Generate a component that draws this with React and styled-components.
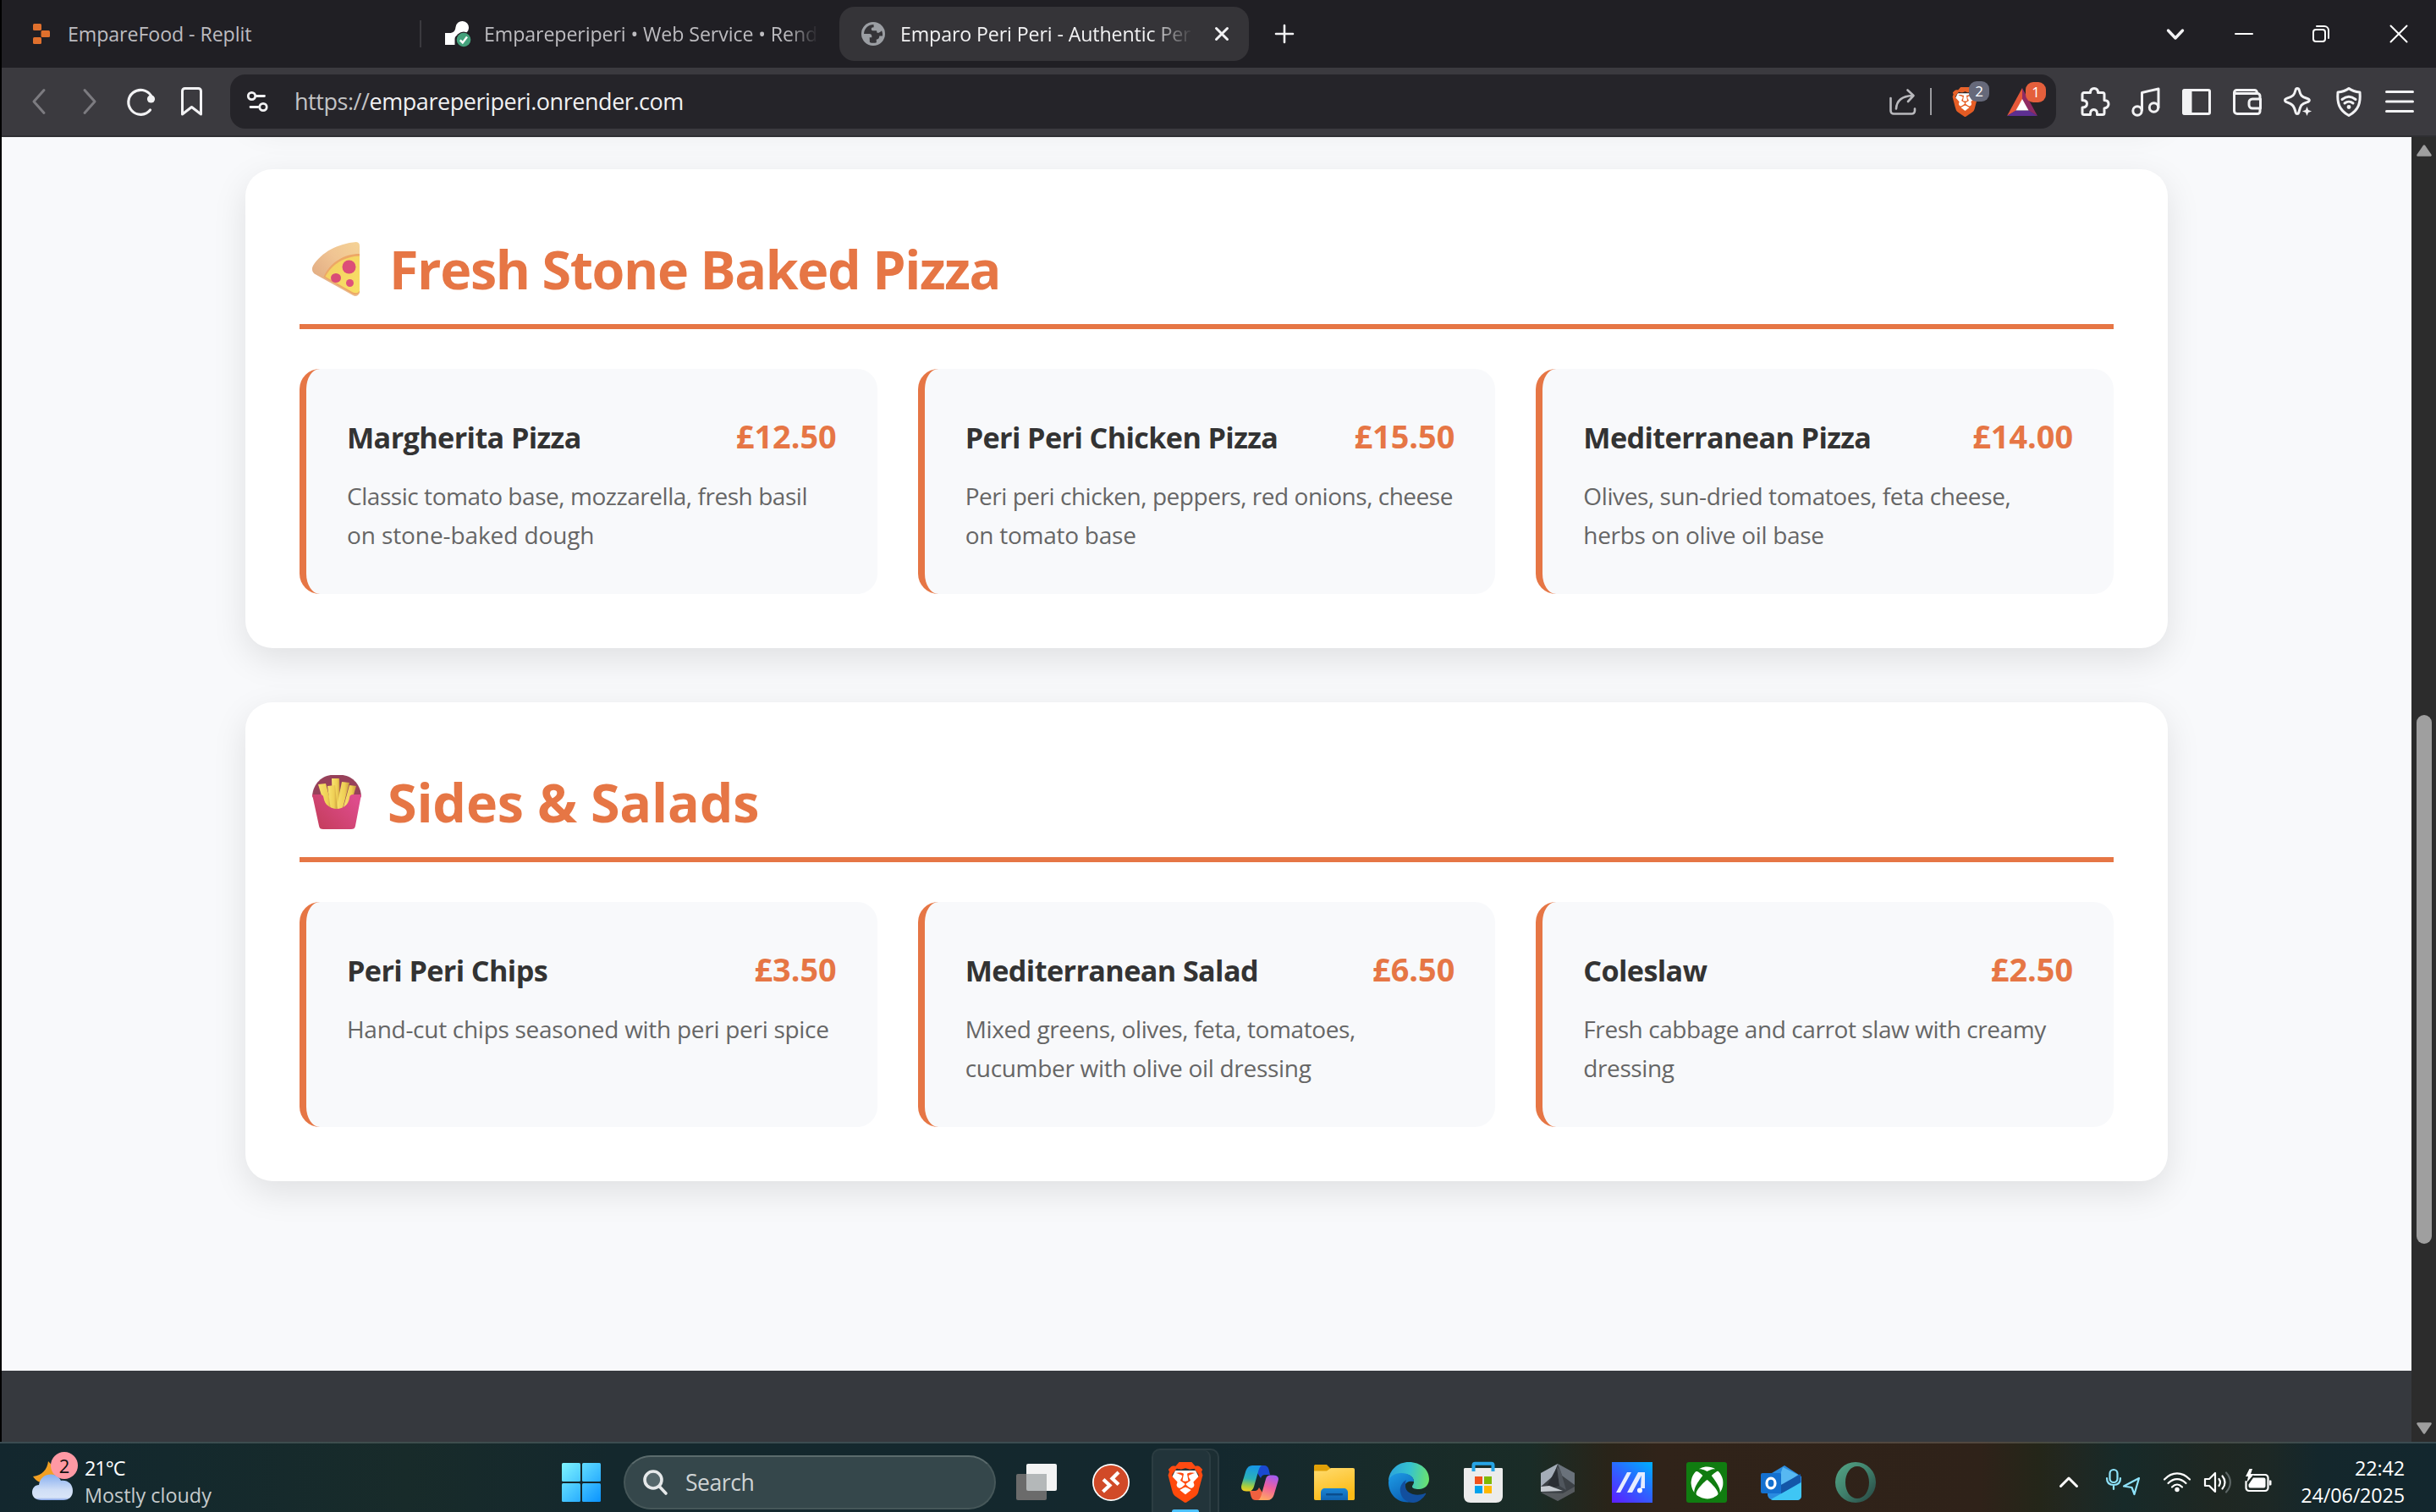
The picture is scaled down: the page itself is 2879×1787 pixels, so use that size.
import React from "react";
import styled, { createGlobalStyle } from "styled-components";
import { SiBrave } from "react-icons/si";
import { FaXbox } from "react-icons/fa";

const Global = createGlobalStyle`
  * { box-sizing: border-box; }
  html, body { margin: 0; padding: 0; background: #000; }
  body { font-family: "Open Sans", "Noto Sans", sans-serif; overflow: hidden; }
  h2, h3, p { margin: 0; }
  svg { display: block; flex: none; overflow: visible; }
`;

const orange = "#e67645";

const Screen = styled.div`
  width: 2879px;
  height: 1787px;
  display: flex;
  flex-direction: column;
  overflow: hidden;
`;
const BrowserFrame = styled.div`
  height: 1704px;
  border-left: 2px solid #000;
  display: flex;
  flex-direction: column;
`;

/* Tab strip */
const TabStrip = styled.div`
  height: 80px;
  flex: none;
  background: #201f24;
  display: flex;
  align-items: center;
`;
const Tab = styled.div`
  width: ${(p) => p.$width}px;
  height: 64px;
  padding-left: ${(p) => p.$pad}px;
  border-radius: 18px;
  background: ${(p) => (p.$active ? "#353438" : "transparent")};
  color: ${(p) => (p.$active ? "#f2f2f3" : "#bdbcc0")};
  display: flex;
  align-items: center;
`;
const TabTitle = styled.div`
  width: ${(p) => p.$width}px;
  margin-left: ${(p) => p.$gap}px;
  font-size: 23.2px;
  letter-spacing: ${(p) => p.$track || 0}px;
  line-height: 36px;
  padding-bottom: 1px;
  white-space: nowrap;
  mask-image: ${(p) => (p.$fade ? `linear-gradient(90deg, #000 calc(100% - ${p.$fade}px), transparent)` : "none")};
`;
const TabDivider = styled.div`
  width: 2px;
  height: 32px;
  background: #3b3a3f;
`;
const CloseSlot = styled.div`
  margin-left: 26px;
`;
const NewTab = styled.div`
  margin-left: 31px;
`;
const WindowControls = styled.div`
  margin-left: auto;
  padding-right: 2px;
  display: flex;
  align-items: center;
`;
const ControlSlot = styled.div`
  width: ${(p) => p.$width}px;
  display: flex;
  justify-content: center;
`;

/* Toolbar */
const Toolbar = styled.div`
  height: 82px;
  flex: none;
  background: #3b3a3f;
  border-bottom: 2px solid #2f2f33;
  display: flex;
  align-items: center;
  padding: 0 13px 0 14px;
`;
const ToolSlot = styled.div`
  width: 60px;
  height: 60px;
  flex: none;
  display: flex;
  align-items: center;
  justify-content: center;
`;
const AddressBar = styled.div`
  width: 2158px;
  height: 64px;
  margin: 0 16px;
  padding: 0 12px 0 20px;
  border-radius: 18px;
  background: #252429;
  display: flex;
  align-items: center;
`;
const Url = styled.div`
  margin-left: 31px;
  margin-right: auto;
  font-size: 27px;
  letter-spacing: -0.45px;
  line-height: 40px;
  color: #f1f1f2;
  span { color: #c3c3c5; }
`;
const BarDivider = styled.div`
  width: 2px;
  height: 32px;
  margin: 0 22px 0 17px;
  background: #9b9b9f;
`;
const BadgeHost = styled.div`
  position: relative;
  margin-right: ${(p) => p.$after}px;
`;
const CountBadge = styled.div`
  position: absolute;
  left: ${(p) => p.$left}px;
  top: -7px;
  width: 24px;
  height: 24px;
  border-radius: 9px;
  background: ${(p) => p.$color};
  color: #fff;
  font-size: 17px;
  line-height: 24px;
  text-align: center;
`;

/* Page */
const Viewport = styled.div`
  flex: 1;
  min-height: 0;
  display: flex;
`;
const Page = styled.main`
  width: 2848px;
  flex: none;
  height: 1542px;
  overflow: hidden;
  background: #f8f9fb;
  display: flex;
  flex-direction: column;
`;
const MenuList = styled.div`
  width: 2272px;
  height: 1458px;
  flex: none;
  margin-left: 288px;
  display: flex;
  flex-direction: column;
`;
const Card = styled.section`
  flex: none;
  margin-bottom: 64px;
  padding: 64px;
  border-radius: 32px;
  background: #fff;
  box-shadow: 0 13px 40px rgba(0, 0, 0, 0.1);
`;
const ScrolledCard = styled(Card)`
  height: 128px;
  margin-top: -154px;
`;
const CardHeading = styled.h2`
  height: 124.8px;
  margin-bottom: 47.6px;
  padding-left: 15px;
  border-bottom: 6px solid ${orange};
  color: ${orange};
  font-size: 62.8px;
  font-weight: 700;
  line-height: 107px;
  letter-spacing: ${(p) => p.$track}px;
  white-space: nowrap;
  display: flex;
  align-items: flex-start;
  svg { margin-top: 22px; margin-right: ${(p) => p.$gap}px; }
`;
const Grid = styled.div`
  display: grid;
  grid-template-columns: repeat(3, 1fr);
  gap: 48px;
`;
const Item = styled.article`
  height: 265.6px;
  padding: 48px;
  border-left: 8px solid ${orange};
  border-radius: 24px;
  background: #f8f9fb;
`;
const ItemTop = styled.div`
  height: 61.4px;
  margin-bottom: 17px;
  display: flex;
  justify-content: space-between;
  align-items: center;
  white-space: nowrap;
`;
const ItemName = styled.h3`
  padding-top: 2px;
  color: #333;
  font-size: 34.2px;
  font-weight: 700;
  letter-spacing: -0.62px;
`;
const Price = styled.span`
  padding-top: 1px;
  color: ${orange};
  font-size: 37.8px;
  font-weight: 700;
`;
const Description = styled.p`
  color: #666;
  font-size: 28px;
  line-height: 46.08px;
  white-space: nowrap;
`;
const DescriptionLine = styled.span`
  display: block;
  letter-spacing: ${(p) => p.$track}px;
`;
const Footer = styled.footer`
  flex: 1;
  background: #36393e;
`;
const Scrollbar = styled.div`
  flex: 1;
  background: #2c2c2c;
  padding: 9px 5px 9px 6px;
  display: flex;
  flex-direction: column;
  align-items: center;
`;
const Thumb = styled.div`
  width: 18px;
  height: 625px;
  margin: 660px 0 auto;
  border-radius: 9px;
  background: #9f9f9f;
`;

/* Taskbar */
const Taskbar = styled.div`
  height: 83px;
  border-top: 2px solid rgba(255, 255, 255, 0.17);
  background: linear-gradient(90deg, #13272e 0, #14292d 200px, #182b2a 480px, #14282d 720px, #14282e 1440px, #182b29 1660px, #1a2c27 1810px, #292419 1900px, #302319 1960px, #2f2219 2340px, #242619 2410px, #222720 2440px, #172a29 2510px, #1f2722 2620px, #1d2825 2680px, #14272c 2740px, #13272e 2879px);
  background-origin: border-box;
  display: flex;
`;
const Weather = styled.div`
  width: 643px;
  padding: 5px 0 0 38px;
  display: flex;
`;
const WeatherIcon = styled.div`
  position: relative;
  width: 62px;
  padding-top: 16px;
`;
const WeatherBadge = styled.div`
  position: absolute;
  left: 22px;
  top: 5px;
  width: 32px;
  height: 32px;
  border-radius: 50%;
  background: #ff99a4;
  color: #111;
  font-size: 22px;
  line-height: 32px;
  text-align: center;
`;
const SmallLines = styled.div`
  padding-top: 8px;
  font-size: 23.4px;
  line-height: 32px;
  color: #fff;
  white-space: nowrap;
`;
const Temperature = styled.div`
  letter-spacing: -1px;
`;
const Muted = styled.div`
  color: #c6cbcc;
`;
const TaskItem = styled.div`
  width: 88px;
  height: 81px;
  padding-top: 11px;
  display: flex;
  align-items: center;
  justify-content: center;
`;
const SearchBox = styled.div`
  width: 440px;
  height: 64px;
  margin: 14px 4px 0 6px;
  padding-left: 21px;
  border-radius: 32px;
  border: 2px solid #465759;
  border-top-color: #5b6b6c;
  background: #35474b;
  color: #cfd3d4;
  font-size: 26.6px;
  letter-spacing: -0.5px;
  line-height: 62px;
  display: flex;
  align-items: center;
  gap: 21px;
`;
const ActiveTask = styled.div`
  width: 80px;
  height: 77px;
  margin: 6px 4px 0;
  border: 2px solid #2c3d42;
  border-bottom: 0;
  border-radius: 10px 10px 0 0;
  background: #22343a;
  display: flex;
  flex-direction: column;
  align-items: center;
  padding-top: 14px;
  box-shadow: inset -8px 0 0 #1c2e33, inset -10px 0 0 #2c3d42;
`;
const Indicator = styled.div`
  width: 32px;
  height: 6px;
  margin-top: 8px;
  border-radius: 3px;
  background: #4cc2ff;
`;
const Tray = styled.div`
  flex: 1;
  display: flex;
  align-items: flex-start;
  padding-left: 197px;
`;
const TraySlot = styled.div`
  margin-left: ${(p) => p.$before}px;
  margin-top: ${(p) => p.$top}px;
`;
const Clock = styled(SmallLines)`
  margin-left: auto;
  padding-right: 37px;
  padding-top: 13px;
  letter-spacing: -0.15px;
  text-align: right;
`;

const Line = ({ w, h, color = "#f2f2f4", sw = 3, children }) => (
  <svg width={w} height={h} viewBox={`0 0 ${w} ${h}`} fill="none" stroke={color} strokeWidth={sw} strokeLinecap="round" strokeLinejoin="round">
    {children}
  </svg>
);

const ReplitIcon = () => (
  <svg width="20" height="24" viewBox="0 0 20 24" fill="#e0702d">
    <rect width="10" height="8" rx="1.5" />
    <rect x="9.5" y="8" width="10.5" height="8" rx="1.5" />
    <rect y="16" width="10" height="8" rx="1.5" />
  </svg>
);
const RenderIcon = () => (
  <svg width="30" height="30" viewBox="0 0 30 30">
    <path d="M0 28V14h5c5 0 7-2.500 7.500-7A7.800 7.800 0 1 1 20 15.500c-4 0-8.500 1-8.500 6V28z" fill="#fff" />
    <circle cx="22" cy="22" r="9.500" fill="#201f24" />
    <circle cx="22" cy="22" r="8.300" fill="#45a17c" />
    <path d="M17.800 22.400l3 3 5.200-6.800" fill="none" stroke="#fff" strokeWidth="2.400" />
  </svg>
);
const GlobeIcon = () => (
  <svg width="28" height="28" viewBox="0 0 28 28">
    <circle cx="14" cy="14" r="14" fill="#9b9ea3" />
    <path d="M14.500 3c-6 0-11.200 4.500-11.500 11 2.500.2 6-.4 7.600.2 1.600.6 1.900 2 1.700 4h-2.600l.2 5.800c2.500 1.200 5.800 1 8 .2l-.2-3.400c2.500-.3 3.500-1.600 3.600-4.200l3.700-.2c.3-2 0-4-1-6.200-1.400 1.500-3.200 3-5.400 2.600l-.6-2.600h-4.700c-1.600 0-2-2.600-.6-3.600l2-.4z" fill="#353438" />
  </svg>
);

const BraveLion = ({ size, color, id }) => (
  <svg width={size} height={size} viewBox="0 0 24 24">
    <defs>
      <linearGradient id={id} x1="0" y1="0" x2="0" y2="1">
        <stop offset="0" stopColor={color[0]} />
        <stop offset="1" stopColor={color[1]} />
      </linearGradient>
    </defs>
    <path d="M6 5h12l2 4-3 9-5 4-5-4-3-9z" fill="#fff" />
    <SiBrave size={24} fill={`url(#${id})`} />
  </svg>
);
const BatIcon = () => (
  <svg width="36" height="33" viewBox="0 0 36 33">
    <path d="M18 0L0 33l11-6.500L18 14z" fill="#e6593a" />
    <path d="M18 0l18 33-11-6.500L18 14z" fill="#8f2b63" />
    <path d="M0 33l10.500-6.500h15L36 33z" fill="#5d2f91" />
    <path d="M18 13l7.500 13.500h-15z" fill="#fff" />
  </svg>
);

const PizzaIcon = () => (
  <svg width="56" height="64" viewBox="0 0 56 64">
    <defs>
      <linearGradient id="crust" x1="0" y1="1" x2="1" y2="0">
        <stop offset="0" stopColor="#dba27c" />
        <stop offset="0.600" stopColor="#f0c493" />
        <stop offset="1" stopColor="#f5d396" />
      </linearGradient>
      <linearGradient id="cheese" x1="0" y1="0" x2="1" y2="1">
        <stop offset="0" stopColor="#f3cf62" />
        <stop offset="1" stopColor="#f8df66" />
      </linearGradient>
    </defs>
    <path d="M52 0c3 .3 4 2 4 5v55c-1.500 4-5 5-8 3L2.500 37.500C-.5 34.500-.6 31 1 28 11 12 30 2 52 0z" fill="url(#crust)" />
    <path d="M56 14C38 14 21 24 13.500 41.500L47 61c3 2 7 1.500 9-2z" fill="#eda766" />
    <path d="M56 16.500C39 17 23 26 15.500 41L48 59.500c3 1.500 6.500 1 8-2z" fill="url(#cheese)" />
    <ellipse cx="43.500" cy="29.500" rx="8" ry="8" fill="#dc4d78" />
    <ellipse cx="28" cy="42.500" rx="6" ry="5.500" fill="#d94c76" />
    <ellipse cx="44.500" cy="48.500" rx="4.500" ry="4.500" fill="#de4f7c" />
  </svg>
);
const FriesIcon = () => (
  <svg width="58" height="64" viewBox="0 0 58 64">
    <defs>
      <linearGradient id="box" x1="0" y1="1" x2="1" y2="0.300">
        <stop offset="0" stopColor="#c23c58" />
        <stop offset="1" stopColor="#de4c8c" />
      </linearGradient>
      <linearGradient id="fry" x1="0" y1="0" x2="1" y2="0">
        <stop offset="0" stopColor="#f8e46f" />
        <stop offset="0.650" stopColor="#efcf55" />
        <stop offset="1" stopColor="#c79a3c" />
      </linearGradient>
    </defs>
    <path d="M0 25C1 10 12 0 24 0h10c12 0 23 10 24 25l-8 14H8z" fill="#97415a" />
    <g fill="url(#fry)">
      <path d="M23 4h9l1 36h-9z" />
      <path d="M35 8l9 1-9 34-7-1z" />
      <path d="M44 12l8 1-6 20-10 8z" />
      <path d="M7 11l9-1 8 30-10-6z" />
      <path d="M18 13l9-1 3 30-8-1z" />
    </g>
    <path d="M0 23h9c3 0 4 1 4.500 4 1 8 8 13 15.500 13s14-5 15-13c.4-3 1.500-4 4.500-4H58l-7 37c-.6 3-2 4-5 4H13c-3 0-4.400-1-5-4z" fill="url(#box)" />
  </svg>
);

const WeatherGlyph = () => (
  <svg width="48" height="46" viewBox="0 0 48 46">
    <defs>
      <linearGradient id="cloud" x1="0" y1="0" x2="0" y2="1">
        <stop offset="0" stopColor="#86aef0" />
        <stop offset="0.600" stopColor="#cfdef6" />
        <stop offset="0.900" stopColor="#d8e4f8" />
        <stop offset="1" stopColor="#7f9fe6" />
      </linearGradient>
    </defs>
    <path d="M19 0c-1 9-7 17-18 18 4 6 9 8 14 7l16-12z" fill="#f3a024" />
    <path d="M11 46C4 46 0 42 0 37c0-5 3-9 8-9 1-8 7-12.500 14-12.500 6 0 10 3 12 7.500 8-1 14 4 14 12 0 7-5 11-11 11z" fill="url(#cloud)" />
  </svg>
);
const StartIcon = () => (
  <svg width="46" height="46" viewBox="0 0 46 46">
    <defs>
      <linearGradient id="win" gradientUnits="userSpaceOnUse" x1="0" y1="0" x2="46" y2="46">
        <stop offset="0" stopColor="#7ff4ff" />
        <stop offset="0.500" stopColor="#45c5ff" />
        <stop offset="1" stopColor="#0a93ff" />
      </linearGradient>
    </defs>
    <g fill="url(#win)">
      <rect width="22" height="22" rx="1.500" />
      <rect x="24" width="22" height="22" rx="1.500" />
      <rect y="24" width="22" height="22" rx="1.500" />
      <rect x="24" y="24" width="22" height="22" rx="1.500" />
    </g>
  </svg>
);
const TaskViewIcon = () => (
  <svg width="48" height="44" viewBox="0 0 48 44">
    <rect x="12" width="36" height="32" rx="2" fill="#f3f3f3" />
    <rect y="12" width="36" height="31" rx="2" fill="#6b6b6b" />
    <path d="M12 12h24v20H14a2 2 0 0 1-2-2z" fill="#b4b8b9" />
  </svg>
);
const RemoteIcon = () => (
  <svg width="44" height="44" viewBox="0 0 44 44">
    <circle cx="22" cy="22" r="22" fill="#fff" />
    <circle cx="22" cy="22" r="20.300" fill="#d14a28" />
    <path d="M13 18.500l7.500 7-8 7.500M31 10l-7.500 7.500 7.500 7" fill="none" stroke="#fff" strokeWidth="4.200" />
  </svg>
);
const CopilotIcon = () => (
  <svg width="44" height="41" viewBox="0 0 44 41">
    <defs>
      <linearGradient id="cpa" x1="0.300" y1="0" x2="0.200" y2="1">
        <stop offset="0" stopColor="#1797e6" />
        <stop offset="0.500" stopColor="#2cb2b5" />
        <stop offset="0.800" stopColor="#a8cf3d" />
        <stop offset="1" stopColor="#f6cf1f" />
      </linearGradient>
      <linearGradient id="cpb" x1="0.700" y1="0" x2="0.400" y2="1">
        <stop offset="0" stopColor="#a25bf0" />
        <stop offset="0.500" stopColor="#f0619c" />
        <stop offset="1" stopColor="#ffa563" />
      </linearGradient>
    </defs>
    <path d="M13 0h14c3 0 4.500 1.500 5.500 4.500L34 11h-6c-2.500 0-4 1.500-5 4z" fill="#1a49d0" />
    <path d="M31 41H17c-3 0-4.500-1.500-5.500-4.500L10 30h6c2.500 0 4-1.500 5-4z" fill="#f0603f" />
    <path d="M13 0h12c-2 0-3.500 2-4.500 5.500L15 25c-1 3.500-3 5.500-6 5.500H6c-5 0-7-3-5.500-8L5.500 6C7 2 9.500 0 13 0z" fill="url(#cpa)" />
    <path d="M31 41H19c2 0 3.500-2 4.500-5.500L29 16c1-3.500 3-4.500 6-4.500h3c5 0 7 3 5.500 7L38.500 35c-1.500 4-4 6-7.500 6z" fill="url(#cpb)" />
  </svg>
);
const FolderIcon = () => (
  <svg width="48" height="42" viewBox="0 0 48 42">
    <defs>
      <linearGradient id="fold" x1="0" y1="0" x2="0.400" y2="1">
        <stop offset="0" stopColor="#ffdc70" />
        <stop offset="1" stopColor="#fcbb17" />
      </linearGradient>
      <linearGradient id="foldb" x1="0" y1="0" x2="0" y2="1">
        <stop offset="0" stopColor="#1a85d4" />
        <stop offset="1" stopColor="#0f62b0" />
      </linearGradient>
    </defs>
    <path d="M0 2c0-1.500.7-2 2-2h13l5 5h20v10H0z" fill="#e0a007" />
    <path d="M0 7.500h15l5-3.500h26c1.500 0 2 .7 2 2v34c0 1.500-.7 2-2 2H2c-1.500 0-2-.7-2-2z" fill="url(#fold)" />
    <path d="M8 42V33c0-3 2-5 5-5h22c3 0 5 2 5 5v9z" fill="url(#foldb)" />
    <rect x="14" y="34" width="20" height="2.500" rx="1" fill="#0b4d8d" />
  </svg>
);
const EdgeIcon = () => (
  <svg width="48" height="48" viewBox="0 0 48 48">
    <defs>
      <linearGradient id="ea" x1="0" y1="0.500" x2="1" y2="0.600">
        <stop offset="0" stopColor="#2ba3dc" />
        <stop offset="0.500" stopColor="#36c3cf" />
        <stop offset="1" stopColor="#6be36c" />
      </linearGradient>
      <linearGradient id="eb" x1="0" y1="0" x2="0.500" y2="1">
        <stop offset="0" stopColor="#1e9de6" />
        <stop offset="1" stopColor="#0c63b8" />
      </linearGradient>
    </defs>
    <path d="M0 22C1 9 11 0 24 0c14 0 24 9 24 20 0 7-5 12-12 12-5 0-8-1-8-3 0-1.500 2-2.500 2-6 0-5-5-9-12-9C9 14 3 17 0 22z" fill="url(#ea)" />
    <path d="M28 47C12 50 0 39 0 24c0-7 7-11 15-11 9 0 15 4.500 15 10 0 0-11-3-11 8 0 9 5 14 9 16z" fill="url(#eb)" />
    <path d="M21 21c-5 3-8 8-7 14 1 8 8 13 15 13 6 0 12-5 15-10 .6-1-.3-1.500-1-1-9 4-24 1-23-10 0-2 0-4 1-6z" fill="#124f9e" />
  </svg>
);
const StoreIcon = () => (
  <svg width="46" height="48" viewBox="0 0 46 48">
    <path d="M0 8.500C0 7.500.7 7 1.500 7h43c1 0 1.500.6 1.500 1.500V40c0 5-3 8-8 8H8c-5 0-8-3-8-8z" fill="#ececec" />
    <path d="M11.500 11V3.500c0-1 .7-1.800 1.800-1.800h19.400c1 0 1.800.8 1.800 1.800V11" fill="none" stroke="#27a5e6" strokeWidth="4" />
    <rect x="13" y="17" width="9" height="9" fill="#f1511b" />
    <rect x="24" y="17" width="9" height="9" fill="#80b900" />
    <rect x="13" y="28" width="9" height="9" fill="#00a2ed" />
    <rect x="24" y="28" width="9" height="9" fill="#ffb800" />
  </svg>
);
const ArmouryIcon = () => (
  <svg width="44" height="44" viewBox="0 0 44 44">
    <path d="M22 0l20 11v22L22 44 2 33V11z" fill="#3c4146" />
    <path d="M22 0L2 11v16l15-13z" fill="#a4adb8" />
    <path d="M22 0l20 11v14L27 14z" fill="#6a727b" />
    <path d="M21 4L7 31l17-5z" fill="#2a2e33" />
    <path d="M21 4l4 3 7 24-8-5z" fill="#50565d" />
    <path d="M2 27v6l26-1-16-6z" fill="#c5cad0" />
    <path d="M2 34l20 10 20-11V27l-14 8z" fill="#565a5e" />
  </svg>
);
const AsusIcon = () => (
  <svg width="48" height="48" viewBox="0 0 48 48">
    <defs>
      <linearGradient id="asus" x1="0.100" y1="1" x2="0.900" y2="0">
        <stop offset="0" stopColor="#5a22ff" />
        <stop offset="0.500" stopColor="#2f62ff" />
        <stop offset="1" stopColor="#00aaff" />
      </linearGradient>
    </defs>
    <rect width="48" height="48" fill="url(#asus)" />
    <path d="M5 36L18 12h5L10 36zM18 36l13-24h6L24 36z" fill="#e6ecff" />
    <path d="M35 12h4v19h-5z" fill="#e6ecff" />
    <circle cx="33" cy="33.500" r="3" fill="#fff" />
  </svg>
);
const XboxTile = styled.div`
  width: 48px;
  height: 48px;
  border-radius: 3px;
  background: #107c10;
  color: #fff;
  display: flex;
  align-items: center;
  justify-content: center;
`;
const OutlookIcon = () => (
  <svg width="48" height="41" viewBox="0 0 48 41">
    <path d="M8 12L28 0l20 13v22c0 4-2 6-6 6H16c-5 0-8-3-8-7z" fill="#2a8be0" />
    <path d="M26 2L44 11 24 26V8z" fill="#57b8f2" />
    <path d="M22 24L47 10v10L24 34z" fill="#1356a8" />
    <path d="M12 40L48 20v15c0 4-2 6-6 6H14z" fill="#3fc6f4" />
    <rect y="9" width="24" height="24" rx="2" fill="#1470cf" />
    <ellipse cx="12" cy="21" rx="5" ry="5.800" fill="none" stroke="#fff" strokeWidth="3.200" />
  </svg>
);
const RingIcon = () => (
  <svg width="48" height="48" viewBox="0 0 48 48">
    <defs>
      <linearGradient id="ring" x1="0" y1="0" x2="1" y2="1">
        <stop offset="0" stopColor="#55a888" />
        <stop offset="0.500" stopColor="#3f7f6b" />
        <stop offset="1" stopColor="#26423f" />
      </linearGradient>
    </defs>
    <path fillRule="evenodd" d="M24 0a24 24 0 1 0 0 48 24 24 0 0 0 0-48zm2 5c8 0 14 8 14 19s-6 19-14 19-14-8-14-19S18 5 26 5z" fill="url(#ring)" />
  </svg>
);

const sections = [
  {
    title: "Fresh Stone Baked Pizza", icon: <PizzaIcon />, gap: 35, track: -1.4,
    items: [
      { name: "Margherita Pizza", price: "£12.50", lines: [["Classic tomato base, mozzarella, fresh basil", -0.45], ["on stone-baked dough", -0.1]] },
      { name: "Peri Peri Chicken Pizza", price: "£15.50", lines: [["Peri peri chicken, peppers, red onions, cheese", -0.47], ["on tomato base", -0.25]] },
      { name: "Mediterranean Pizza", price: "£14.00", lines: [["Olives, sun-dried tomatoes, feta cheese,", -0.4], ["herbs on olive oil base", -0.3]] },
    ],
  },
  {
    title: "Sides & Salads", icon: <FriesIcon />, gap: 31, track: -0.2,
    items: [
      { name: "Peri Peri Chips", price: "£3.50", lines: [["Hand-cut chips seasoned with peri peri spice", -0.28]] },
      { name: "Mediterranean Salad", price: "£6.50", lines: [["Mixed greens, olives, feta, tomatoes,", -0.38], ["cucumber with olive oil dressing", -0.3]] },
      { name: "Coleslaw", price: "£2.50", lines: [["Fresh cabbage and carrot slaw with creamy", -0.42], ["dressing", -0.4]] },
    ],
  },
];

export default function App() {
  return (
    <Screen>
      <Global />
      <BrowserFrame>
        <TabStrip>
          <Tab $width={494} $pad={37}>
            <ReplitIcon />
            <TabTitle $width={380} $gap={21} $track={-0.08}>EmpareFood - Replit</TabTitle>
          </Tab>
          <TabDivider />
          <Tab $width={494} $pad={28}>
            <RenderIcon />
            <TabTitle $width={395} $gap={16} $fade={36} $track={-0.1}>Empareperiperi • Web Service • Rend</TabTitle>
          </Tab>
          <Tab $width={484} $pad={26} $active>
            <GlobeIcon />
            <TabTitle $width={346} $gap={18} $fade={52} $track={-0.12}>Emparo Peri Peri - Authentic Peri</TabTitle>
            <CloseSlot>
              <Line w={16} h={16} sw={3}><path d="M1.500 1.500l13 13M14.500 1.500l-13 13" /></Line>
            </CloseSlot>
          </Tab>
          <NewTab>
            <Line w={22} h={22} sw={2.600}><path d="M11 1v20M1 11h20" /></Line>
          </NewTab>
          <WindowControls>
            <ControlSlot $width={80}>
              <Line w={20} h={13} sw={3.400}><path d="M1.500 2l8.500 9 8.500-9" /></Line>
            </ControlSlot>
            <ControlSlot $width={82}>
              <Line w={20} h={20} sw={2} color="#fff"><path d="M0 10h20" /></Line>
            </ControlSlot>
            <ControlSlot $width={100}>
              <Line w={20} h={20} sw={2} color="#fff">
                <rect x="1" y="5" width="14" height="14" rx="3" />
                <path d="M5 1h9a5 5 0 0 1 5 5v9" />
              </Line>
            </ControlSlot>
            <ControlSlot $width={84}>
              <Line w={20} h={20} sw={2} color="#fff"><path d="M.5.5l19 19M19.500.5l-19 19" /></Line>
            </ControlSlot>
          </WindowControls>
        </TabStrip>

        <Toolbar>
          <ToolSlot><Line w={16} h={30} color="#7c7b80"><path d="M14 1.500L2 15l12 13.500" /></Line></ToolSlot>
          <ToolSlot><Line w={16} h={30} color="#7c7b80"><path d="M2 1.500L14 15 2 28.500" /></Line></ToolSlot>
          <ToolSlot>
            <Line w={34} h={32} sw={3.200}>
              <path d="M28.500 26A14.500 14.500 0 1 1 29.500 9" />
              <circle cx="29.500" cy="13" r="4.600" fill="#f2f2f4" stroke="none" />
            </Line>
          </ToolSlot>
          <ToolSlot><Line w={25} h={34}><path d="M4.500 1.500h16a3 3 0 0 1 3 3V32l-11-8.500L1.500 32V4.500a3 3 0 0 1 3-3z" /></Line></ToolSlot>
          <AddressBar>
            <Line w={25} h={24} sw={2.800}>
              <circle cx="5.500" cy="5.500" r="4.200" /><path d="M11 5.500h9.500M4 18.500h9" /><circle cx="19" cy="18.500" r="4.200" />
            </Line>
            <Url><span>https://</span>empareperiperi.onrender.com</Url>
            <Line w={31} h={31} color="#b9b9bd" sw={2.600}>
              <path d="M1.500 11v15a3.500 3.500 0 0 0 3.500 3.500h21.500a3.500 3.500 0 0 0 3.500-3.500v-2.500" />
              <path d="M8 23.500C8.500 15 14 8.500 27.500 8M21.500 1.500L28.500 8l-6.500 7" />
            </Line>
            <BarDivider />
            <BadgeHost $after={32}>
              <BraveLion size={35} color={["#e8632b", "#e35a22"]} id="lionBar" />
              <CountBadge $left={22} $color="#66697a">2</CountBadge>
            </BadgeHost>
            <BadgeHost $after={10}>
              <BatIcon />
              <CountBadge $left={22} $color="#e45f3c">1</CountBadge>
            </BadgeHost>
          </AddressBar>
          <ToolSlot>
            <Line w={34} h={34}>
              <path d="M4 6.500h7.500c0-3 1.700-5 4.500-5s4.500 2 4.500 5H26a2 2 0 0 1 2 2v7c3 0 5 1.700 5 4.500S31 24.500 28 25v5.500a2 2 0 0 1-2 2h-6.500c.5-4-1.500-6-4-6s-4.500 2-4 6H4a2 2 0 0 1-2-2V24c4 0 5.500-2 5.500-4.500S6 15.500 2 15.500v-7a2 2 0 0 1 2-2z" />
            </Line>
          </ToolSlot>
          <ToolSlot>
            <Line w={34} h={34}>
              <circle cx="7" cy="28" r="5.200" /><circle cx="26.500" cy="24" r="5.200" /><path d="M12.500 27V6.500L32 2v22" />
            </Line>
          </ToolSlot>
          <ToolSlot>
            <Line w={34} h={31}>
              <rect x="1.500" y="1.500" width="31" height="28" rx="1.500" /><path d="M2 2h8v27H2z" fill="#f2f2f4" />
            </Line>
          </ToolSlot>
          <ToolSlot>
            <Line w={34} h={31}>
              <path d="M32 12V8.500a3 3 0 0 0-3-3H1.500V26a3.500 3.500 0 0 0 3.500 3.500h24a3 3 0 0 0 3-3V23" />
              <path d="M1.500 5.500v-1a3 3 0 0 1 3-3h21a3 3 0 0 1 3 3v1M32.500 12H23a4 4 0 0 0-4 4v3a4 4 0 0 0 4 4h9.500z" />
            </Line>
          </ToolSlot>
          <ToolSlot>
            <Line w={34} h={34}>
              <path d="M16 1.500c1.200 0 2 .8 2.300 2 1.400 6 2.700 7.800 9 9.700 1.300.4 3 1 3 2.300s-1.500 2-3 2.400c-3 1-5 2-6.500 3.600-1.800 3-2.200 6-3 8.500-.3 1-.9 1.500-1.800 1.500s-1.500-.6-1.800-1.500c-2-7.500-3.200-9.800-10.200-12.100-1.300-.4-2.500-1-2.500-2.400s1.200-2 2.500-2.400c7-2 8.500-3.600 10-9.600.3-1.200.8-2 2-2z" />
              <path d="M27.500 23l1.600 3.900 4 1.600-4 1.600-1.600 3.900-1.600-3.900-4-1.600 4-1.600z" fill="#f2f2f4" stroke="none" />
            </Line>
          </ToolSlot>
          <ToolSlot>
            <Line w={30} h={35}>
              <path d="M15 1.500c4 3 8 4 13 4.500 1 12-1 21-13 27.500C3 27 1 18 2 6c5-.5 9-1.500 13-4.500z" />
              <path d="M7 14.500c5-4 11-4 16 0M10 19c3-2.500 7-2.500 10 0" />
              <circle cx="15" cy="23.500" r="2.400" fill="#f2f2f4" stroke="none" />
            </Line>
          </ToolSlot>
          <ToolSlot><Line w={34} h={26}><path d="M1.500 1.500h31M1.500 13h31M1.500 24.500h31" /></Line></ToolSlot>
        </Toolbar>

        <Viewport>
          <Page>
            <MenuList>
              <ScrolledCard />
              {sections.map((s) => (
                <Card key={s.title}>
                  <CardHeading $gap={s.gap} $track={s.track}>{s.icon}{s.title}</CardHeading>
                  <Grid>
                    {s.items.map((item) => (
                      <Item key={item.name}>
                        <ItemTop><ItemName>{item.name}</ItemName><Price>{item.price}</Price></ItemTop>
                        <Description>
                          {item.lines.map(([text, track]) => (
                            <DescriptionLine key={text} $track={track}>{text}</DescriptionLine>
                          ))}
                        </Description>
                      </Item>
                    ))}
                  </Grid>
                </Card>
              ))}
            </MenuList>
            <Footer />
          </Page>
          <Scrollbar>
            <svg width="18" height="14" viewBox="0 0 18 14"><path d="M9 1.500L16.500 12.500h-15z" fill="#9f9f9f" stroke="#9f9f9f" strokeWidth="2.600" strokeLinejoin="round" /></svg>
            <Thumb />
            <svg width="18" height="14" viewBox="0 0 18 14"><path d="M9 12.500L1.500 1.500h15z" fill="#9f9f9f" stroke="#9f9f9f" strokeWidth="2.600" strokeLinejoin="round" /></svg>
          </Scrollbar>
        </Viewport>
      </BrowserFrame>

      <Taskbar>
        <Weather>
          <WeatherIcon>
            <WeatherGlyph />
            <WeatherBadge>2</WeatherBadge>
          </WeatherIcon>
          <SmallLines><Temperature>21°C</Temperature><Muted>Mostly cloudy</Muted></SmallLines>
        </Weather>
        <TaskItem><StartIcon /></TaskItem>
        <SearchBox>
          <Line w={29} h={30} color="#e6e9ea" sw={3.600}><circle cx="12" cy="12" r="10" fill="#55676b" /><path d="M19.500 20l7.500 8" /></Line>
          Search
        </SearchBox>
        <TaskItem><TaskViewIcon /></TaskItem>
        <TaskItem><RemoteIcon /></TaskItem>
        <ActiveTask>
          <BraveLion size={48} color={["#ff4a12", "#ff4a0a"]} id="lionTask" />
          <Indicator />
        </ActiveTask>
        <TaskItem><CopilotIcon /></TaskItem>
        <TaskItem><FolderIcon /></TaskItem>
        <TaskItem><EdgeIcon /></TaskItem>
        <TaskItem><StoreIcon /></TaskItem>
        <TaskItem><ArmouryIcon /></TaskItem>
        <TaskItem><AsusIcon /></TaskItem>
        <TaskItem><XboxTile><FaXbox size={39} /></XboxTile></TaskItem>
        <TaskItem><OutlookIcon /></TaskItem>
        <TaskItem><RingIcon /></TaskItem>
        <Tray>
          <TraySlot $before={0} $top={39}><Line w={22} h={13} color="#fff"><path d="M1.500 11.500L11 2l9.500 9.500" /></Line></TraySlot>
          <TraySlot $before={33} $top={30}>
            <Line w={18} h={24} color="#8fe3fb" sw={2.200}><rect x="4.500" y="1" width="9" height="15" rx="4.500" /><path d="M1 11c0 5 3 8 8 8s8-3 8-8M9 19v5" /></Line>
          </TraySlot>
          <TraySlot $before={2} $top={40}>
            <Line w={20} h={21} color="#8fe3fb" sw={2.200}><path d="M19 1L1 10.500l9.500 1.500 3 8z" /></Line>
          </TraySlot>
          <TraySlot $before={28} $top={34}>
            <Line w={32} h={24} color="#fff" sw={2.200}><path d="M1 8.500c9-9.500 21-9.500 30 0M5.500 13c6.500-6.500 14.500-6.500 21 0M10 17.500c4-4 8-4 12 0" /><circle cx="16" cy="20.500" r="2.700" fill="#fff" stroke="none" /></Line>
          </TraySlot>
          <TraySlot $before={16} $top={33}>
            <Line w={32} h={26} color="#fff" sw={2.200}><path d="M1 9h5l7-7v22l-7-7H1zM17.500 9c1.800 2.500 1.800 5.500 0 8M21.500 5.500c4 4.500 4 10.500 0 15" /><path d="M26 1.500c6.500 7 6.500 16 0 23" stroke="#5d6665" /></Line>
          </TraySlot>
          <TraySlot $before={16} $top={30}>
            <Line w={32} h={27} color="#fff" sw={2.200}>
              <path d="M11 7h13a3.500 3.500 0 0 1 3.500 3.500v12A3.500 3.500 0 0 1 24 26H5a3.500 3.500 0 0 1-3.500-3.500V15" />
              <path d="M10 10.500h12.500a2 2 0 0 1 2 2v8a2 2 0 0 1-2 2H6.500a2 2 0 0 1-2-2v-2zM29 13.500h1.500a1 1 0 0 1 1 1v4a1 1 0 0 1-1 1H29zM5.500 0L1 9h3l-1.500 7L11 6H7l2-6z" fill="#fff" stroke="none" />
            </Line>
          </TraySlot>
          <Clock>22:42<br />24/06/2025</Clock>
        </Tray>
      </Taskbar>
    </Screen>
  );
}
